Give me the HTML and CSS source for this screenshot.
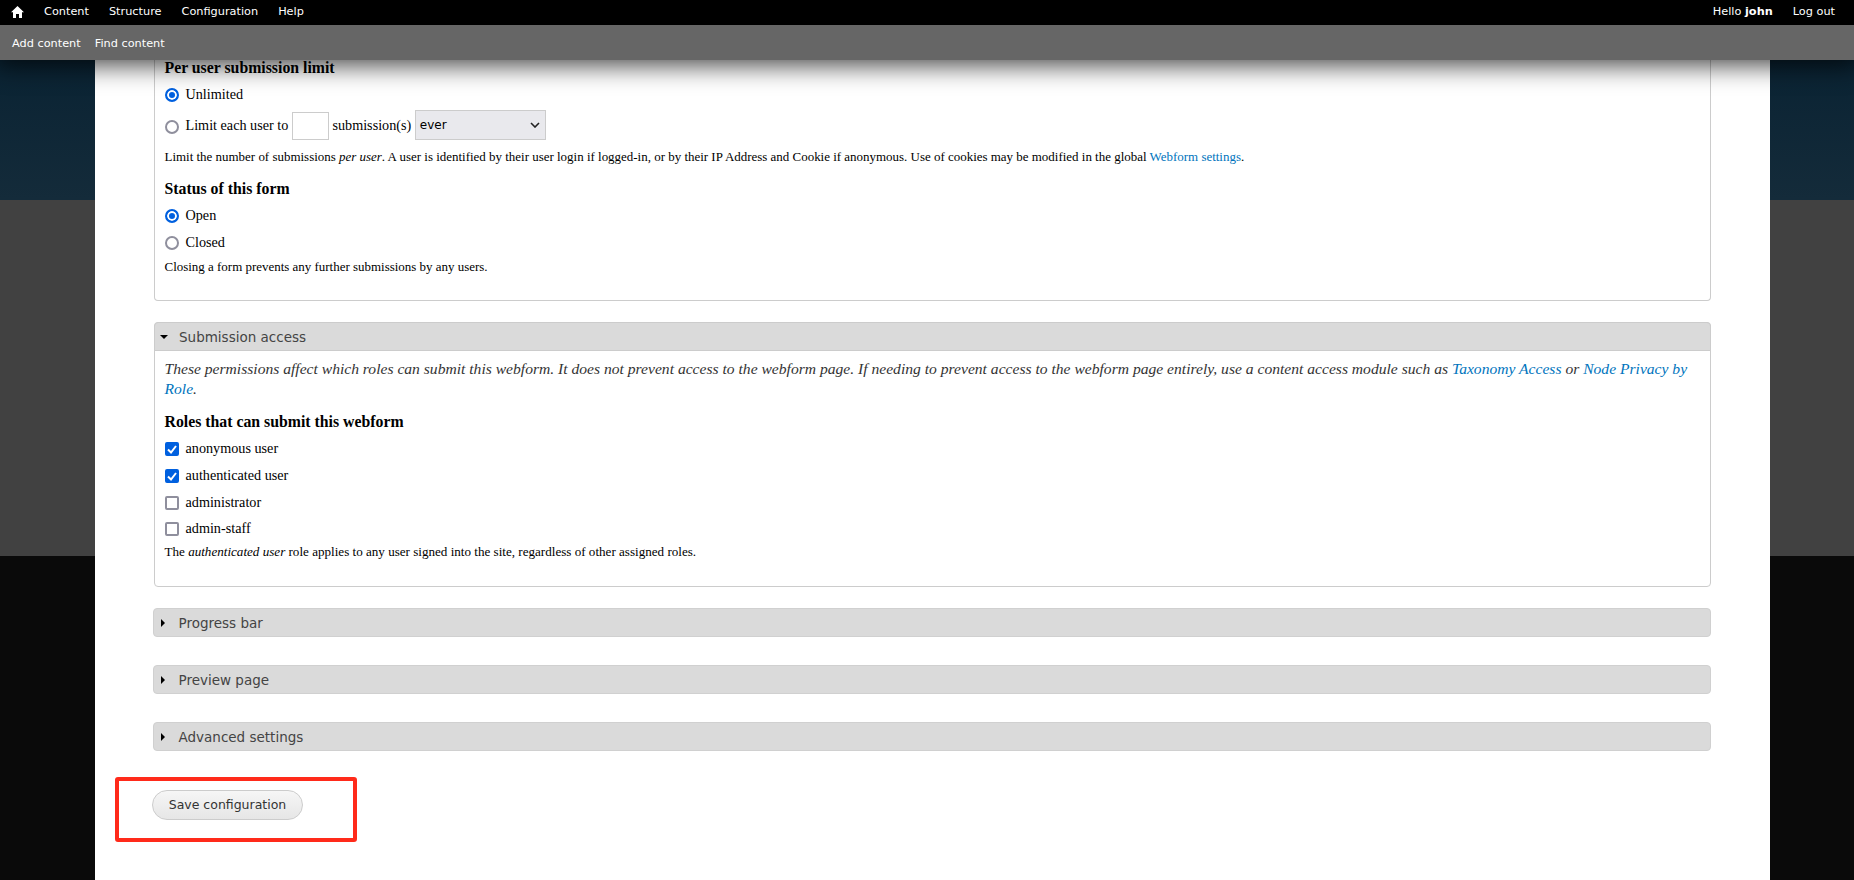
FILE: index.html
```html
<!DOCTYPE html>
<html lang="en">
<head>
<meta charset="utf-8">
<title>Webform settings</title>
<link rel="stylesheet" href="styles.css">
</head>
<body>
<header class="toolbar">
  <nav class="menu">
    <div class="menu-left">
      <a class="home" href="#"><svg width="13" height="12" viewBox="0 0 13 12"><path d="M6.500 0 13 6.200h-2V12H8V8H5v4H2V6.200H0z" fill="#fff"/></svg></a>
      <a href="#">Content</a><a href="#">Structure</a><a href="#">Configuration</a><a href="#">Help</a>
    </div>
    <div class="menu-right"><span>Hello <strong>john</strong></span><a href="#">Log out</a></div>
  </nav>
  <nav class="shortcuts"><a href="#">Add content</a><a href="#">Find content</a></nav>
</header>
<main class="page">
  <section class="fieldset first">
    <h4 class="field-title">Per user submission limit</h4>
    <label class="opt r1"><span class="radio on"></span>Unlimited</label>
    <div class="opt r2"><span class="radio"></span>Limit each user to <span class="num"></span> submission(s) <span class="select">ever<svg width="10" height="6" viewBox="0 0 10 6"><path d="M1 1l4 4 4-4" fill="none" stroke="#222" stroke-width="1.6"/></svg></span></div>
    <p class="help h1">Limit the number of submissions <em>per user</em>. A user is identified by their user login if logged-in, or by their IP Address and Cookie if anonymous. Use of cookies may be modified in the global <a href="#">Webform settings</a>.</p>
    <h4 class="field-title t2">Status of this form</h4>
    <label class="opt r3"><span class="radio on"></span>Open</label>
    <label class="opt r4"><span class="radio"></span>Closed</label>
    <p class="help h2">Closing a form prevents any further submissions by any users.</p>
  </section>
  <section class="fieldset access">
    <div class="legend"><svg class="arrow" width="8" height="8" viewBox="0 0 8 8"><path d="M0 2h8L4 6z"/></svg>Submission access</div>
    <p class="desc">These permissions affect which roles can submit this webform. It does not prevent access to the webform page. If needing to prevent access to the webform page entirely, use a content access module such as <a href="#">Taxonomy Access</a> or <a href="#">Node Privacy by Role</a>.</p>
    <h4 class="field-title t3">Roles that can submit this webform</h4>
    <label class="opt c"><span class="check on"><svg width="14" height="14" viewBox="0 0 14 14"><path d="M3 7.500l3 3 5-6.500" fill="none" stroke="#fff" stroke-width="2"/></svg></span>anonymous user</label>
    <label class="opt c"><span class="check on"><svg width="14" height="14" viewBox="0 0 14 14"><path d="M3 7.500l3 3 5-6.500" fill="none" stroke="#fff" stroke-width="2"/></svg></span>authenticated user</label>
    <label class="opt c"><span class="check"></span>administrator</label>
    <label class="opt c"><span class="check"></span>admin-staff</label>
    <p class="help h3">The <em>authenticated user</em> role applies to any user signed into the site, regardless of other assigned roles.</p>
  </section>
  <div class="bar"><svg class="arrow" width="8" height="8" viewBox="0 0 8 8"><path d="M2 0v8l4-4z"/></svg>Progress bar</div>
  <div class="bar"><svg class="arrow" width="8" height="8" viewBox="0 0 8 8"><path d="M2 0v8l4-4z"/></svg>Preview page</div>
  <div class="bar"><svg class="arrow" width="8" height="8" viewBox="0 0 8 8"><path d="M2 0v8l4-4z"/></svg>Advanced settings</div>
  <div class="actions">
    <button class="save" type="button">Save configuration</button>
    <div class="callout"></div>
  </div>
</main>
</body>
</html>
```

FILE: styles.css
```css
* { box-sizing: border-box; }
html, body { margin: 0; height: 880px; overflow: hidden; }
body {
  font-family: "Liberation Serif", serif;
  font-size: 13px;
  color: #111;
  background: linear-gradient(#0a2333 60px, #142b3a 200px, #414141 200px, #414141 556px, #0a0a0a 556px, #0a0a0a 100%);
}
a { color: #0074bd; text-decoration: none; }
.toolbar { position: relative; z-index: 2; height: 60px; font-family: "DejaVu Sans", sans-serif; font-size: 11.3px; box-shadow: 0 0 26px 5px rgba(0,0,0,.75); }
.toolbar a { color: #fff; }
.menu { height: 25px; background: #000; display: flex; justify-content: space-between; align-items: center; padding: 0 19px 2px 11px; color: #fff; }
.menu-left { display: flex; align-items: center; gap: 20px; }
.home { display: flex; }
.menu-right { display: flex; gap: 20px; }
.shortcuts { height: 35px; background: #666; display: flex; align-items: center; gap: 14px; padding: 2px 12px 0; }
.page { margin: 0 84px 0 95px; height: 820px; background: #fff; padding: 0 59px; position: relative; }
.fieldset { border: 1px solid #ccc; border-radius: 4px; margin-left: -.5px; }
.first { height: 241px; border-top: 0; border-radius: 0 0 4px 4px; padding: 0 10px; margin-bottom: 21px; }
.field-title { margin: 0; font-size: 15.8px; font-weight: bold; line-height: 16px; color: #000; }
.opt { display: flex; align-items: center; font-size: 14.2px; line-height: 16px; white-space: pre; color: #000; }
.radio { width: 14px; height: 14px; border: 2px solid #8f8f9d; border-radius: 50%; margin: 2px 7px 0 0; background: #fff; flex: none; }
.radio.on { border-color: #0060df; box-shadow: inset 0 0 0 2px #fff; background: #0060df; }
.r1 { margin-top: 10px; }
.r2 { margin-top: 8px; height: 30px; }
.r2 .radio { margin-top: 4px; }
.num { display: inline-block; width: 37px; height: 28px; margin-top: 2px; border: 1px solid #ccc; }
.select { display: inline-flex; justify-content: space-between; align-items: center; width: 131px; height: 30px; padding: 0 5px 0 4px; background: #e9e9ed; border: 1px solid #ccc; font-family: "DejaVu Sans", sans-serif; font-size: 12px; }
.help { margin: 0; font-size: 12.96px; line-height: 16px; color: #000; }
.h1 { margin-top: 9px; }
.t2 { margin-top: 16px; }
.r3 { margin-top: 10px; }
.r4 { margin-top: 11px; }
.h2 { margin-top: 9px; }
.access { height: 265px; margin-bottom: 21px; padding: 0 10px; }
.legend { background: #dadada; height: 29px; margin: -1px -11px 0; border: 1px solid #ccc; border-radius: 4px 4px 0 0; display: flex; align-items: center; font-family: "DejaVu Sans", sans-serif; font-size: 13.5px; color: #444; }
.arrow { margin: 0 11.500px 0 5px; flex: none; }
.desc { margin: 8px 0 0; font-style: italic; font-size: 15.6px; line-height: 20px; color: #333; }
.t3 { margin-top: 15px; }
.c { height: 26.7px; }
.t3 + .c { margin-top: 5px; }
.check { width: 14px; height: 14px; border: 2px solid #8f8f9d; border-radius: 2px; margin: 2px 7px 0 0; flex: none; display: flex; align-items: center; justify-content: center; background: #fff; }
.check.on { background: #0060df; border-color: #0060df; }
.check svg { flex: none; }
.h3 { margin-top: 2px; font-size: 13.1px; }
.bar { height: 29px; margin: 0 0 28px -1px; background: #dadada; border: 1px solid #d0d0d0; border-radius: 4px; display: flex; align-items: center; font-family: "DejaVu Sans", sans-serif; font-size: 13.5px; color: #444; }
.actions { position: relative; margin: 39px 0 0 -2px; }
.save { display: block; width: 151px; height: 30px; border: 1px solid #ccc; border-radius: 15px; background: linear-gradient(#f6f6f6, #e6e6e6); font-family: "DejaVu Sans", sans-serif; font-size: 12.5px; color: #333; padding: 0 0 2px; }
.callout { position: absolute; left: -37px; top: -13px; width: 242px; height: 65px; border: 4px solid #ff2a1a; border-radius: 3px; }
```
